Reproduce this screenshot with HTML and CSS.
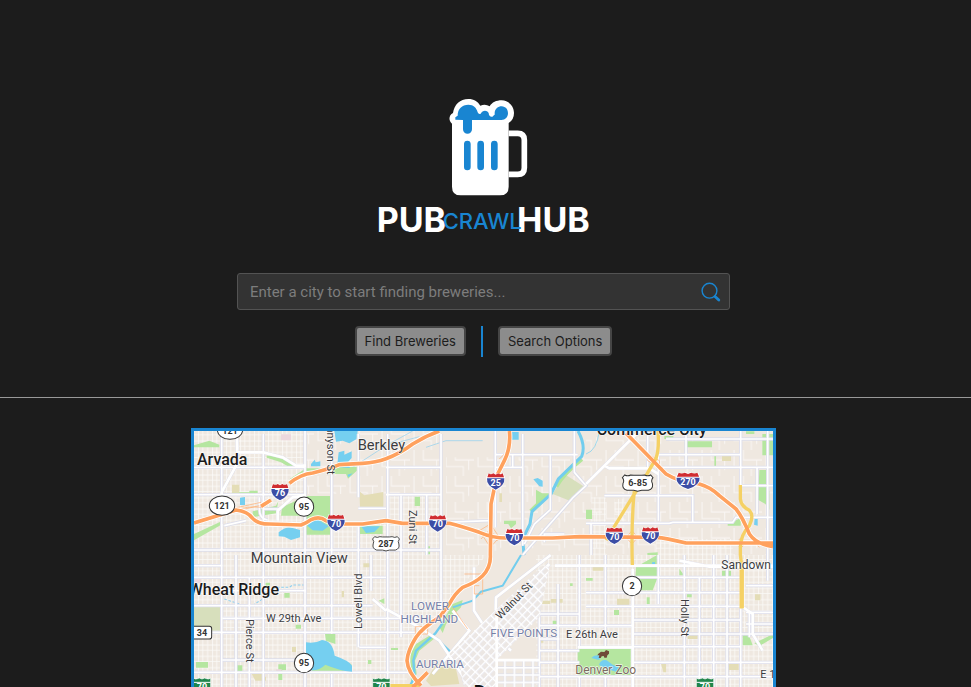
FILE: index.html
```html
<!DOCTYPE html>
<html lang="en">
<head>
<meta charset="utf-8">
<title>Pub Crawl Hub</title>
<link rel="stylesheet" href="styles.css">
</head>
<body>
<header class="hero">
  <svg class="logo" viewBox="-6 0 693 450" role="img" aria-label="Pub Crawl Hub">
    <path d="M416 130H443Q463 130 463 150V233Q463 253 443 253H416" fill="none" stroke="#fff" stroke-width="17"/>
    <path d="M246 101C235 93 236 75 249 69C253 43 270 27 295 27C312 27 323 34 331 47Q346 40 359 49C366 37 379 31 395 31C417 32 432 48 432 69Q432 89 416 99V290Q416 316 390 316H272Q246 316 246 290Z" fill="#fff"/>
    <path d="M256 89V82L263 77C263 56 276 44 295 44C311 44 320 54 323 67Q326 74 332 71C337 61 350 59 356 69C356 78 365 85 370 77Q376 75 374 68C375 57 384 49 395 49C407 50 414 58 414 70C414 81 406 90 394 90H306V118A13 13 0 0 1 279 118V90Z" fill="#1985d1"/>
    <path d="M292 162V231M332 162V231M373 162V231" stroke="#1985d1" stroke-width="20" stroke-linecap="round"/>
    <g class="wordmark">
      <text x="20" y="427" class="word-strong">PUB</text>
      <text x="441" y="427" class="word-strong">HUB</text>
      <text x="218" y="416" class="word-light">CRAWL</text>
    </g>
  </svg>
  <form class="search" onsubmit="return false">
    <div class="field">
      <input type="text" class="field-input" aria-label="City" placeholder="Enter a city to start finding breweries...">
      <svg class="field-icon" viewBox="0 0 20 20" aria-hidden="true"><circle cx="8.5" cy="8.7" r="7.4" fill="none" stroke="#1985d1" stroke-width="1.4"/><path d="M14 14.4L17.8 18" stroke="#1985d1" stroke-width="2.8" stroke-linecap="round"/></svg>
    </div>
    <div class="actions">
      <button type="submit" class="btn">Find Breweries</button>
      <span class="divider"></span>
      <button type="button" class="btn">Search Options</button>
    </div>
  </form>
</header>
<main class="map-section">
<div class="map">
<svg class="map-canvas" viewBox="24 21 1737 768" preserveAspectRatio="xMidYMin slice" role="img" aria-label="Map of Denver">
  <defs>
    <pattern id="blocks" width="42" height="34" patternUnits="userSpaceOnUse"><path d="M8 0V34M23 0V34M0 17H42M38 0V34M0 33H42" stroke="#fbf9f7" stroke-width="2.5"/></pattern>
    <pattern id="sparse" width="96" height="78" patternUnits="userSpaceOnUse"><path d="M12 0V50H64V78M40 0V30H96M80 30V60" fill="none" stroke="#f9f6f4" stroke-width="3"/></pattern>
    <pattern id="downtown" width="22" height="17" patternUnits="userSpaceOnUse" patternTransform="rotate(-46)"><path d="M0 2H22M2 0V17" stroke="#dfdfeb" stroke-width="8"/><path d="M0 2H22M2 0V17" stroke="#fff" stroke-width="5"/></pattern>
    <pattern id="center" width="28" height="22" patternUnits="userSpaceOnUse"><path d="M0 5H28M5 0V22" stroke="#dedfeb" stroke-width="8"/><path d="M0 5H28M5 0V22" stroke="#fff" stroke-width="5"/></pattern>
    <symbol id="interstate" viewBox="0 0 60 60" overflow="visible">
      <path d="M7 5L14 9Q21 8 24 4L30 8L36 4Q39 8 46 9L53 5Q54 13 58 18Q61 42 30 58Q-1 42 2 18Q6 13 7 5Z" fill="#fff"/>
      <path d="M9 6Q15 11 23 6L30 10L37 6Q45 11 51 6L55 18H5Z" fill="#d02d31"/>
      <path d="M4 21H56Q58 42 30 55Q2 42 4 21Z" fill="#3c4da5"/>
    </symbol>
    <symbol id="usroute" viewBox="0 0 96 54" overflow="visible"><path d="M9 3Q18 8 27 3L36 4H60L69 3Q78 8 87 3L94 11Q87 20 92 28Q96 44 80 49H60L48 52L36 49H16Q0 44 4 28Q9 20 2 11Z" fill="#fff" stroke="#333" stroke-width="3"/></symbol>
    <symbol id="business" viewBox="0 0 56 50" overflow="visible"><path d="M2 4Q8 9 14 6L20 4L28 7L36 4L42 6Q48 9 54 4V50H2Z" fill="#20854b" stroke="#fff" stroke-width="2"/><path d="M2 17H54" stroke="#fff" stroke-width="3"/></symbol>
  </defs>

  <rect x="24" y="21" width="1737" height="1500" fill="#efe8e0"/>
  <g>
    <path d="M24 21H360V300H600V212H765V393H900L790 540L663 700V790H24ZM1050 393H1761V790H1050Z" fill="url(#blocks)"/>
    <path d="M360 21H765V210H360ZM780 100H1200V380H780ZM1200 40H1761V393H1200Z" fill="url(#sparse)"/>
    <path d="M1215 220H1260V393H1215ZM1410 345H1640V393H1410ZM1285 225H1320V290H1285Z" fill="url(#blocks)"/>
  </g>

  <g class="park">
    <path d="M24 64L70 50L100 62V70H24ZM138 188L159 204H190V208H215V200H190V206H138ZM242 95Q275 90 295 105L325 122L310 130L285 115L242 101Z"/>
    <path d="M310 166L360 133H430L425 140L360 152L325 166ZM430 128H515V138L486 164L480 150H430ZM288 250L360 216H432V332H360V275H285ZM200 262L270 245L277 232L270 268L200 280ZM24 330L110 290V300L24 349ZM520 305H590V330H520Z"/>
    <path d="M686 218H702V246H686ZM725 367H732V391H725ZM1050 197L1068 208L1095 208L1060 240H1050ZM954 290H990V300L975 313L967 300H954Z"/>
    <path d="M1503 52H1578V70H1503ZM1729 30H1761V94H1729ZM1680 22H1705V30H1680ZM1435 36H1462V45H1435ZM1585 90H1590V126H1585ZM1720 138H1740V185L1750 202V257L1738 240L1716 227ZM1200 257L1218 257V285H1200ZM1625 300L1664 282V305H1625ZM1384 387L1415 385V393H1384Z"/>
    <path d="M1350 429L1413 393V465L1400 499H1360Q1350 475 1348 465ZM1480 434L1494 454H1480ZM1200 462H1220V470H1200ZM1608 440H1635V456H1608ZM1284 558H1299V573H1284ZM1382 520H1391V540H1382ZM1503 507H1517V520H1503ZM1670 629H1687L1700 664H1670ZM1705 658L1761 630V642L1720 666Z"/>
    <path d="M1175 673H1334V753H1175ZM295 507H311V521H295ZM329 602H345V614H329ZM239 476H252V488H239ZM30 714H66V731H30ZM153 724H169V750H153ZM277 721H300V738H289V768H277ZM417 629H448V660L420 650ZM378 735L430 705L496 720V744H378ZM546 708H556V720H546ZM578 530L595 523V540Z"/>
    <path d="M800 540L830 528L825 550L805 570L780 600L770 627L760 610ZM673 690L690 660L730 635L750 640L700 680L687 710L692 750L675 780ZM615 672H636V678H615ZM1100 590H1113V603H1100ZM1152 478H1160V486H1152Z"/>
  </g>
  <path d="M1190 185L1135 150L1100 210L1155 232L1198 185ZM24 546H102V620H24Z" fill="#d7dfbc"/>
  <path d="M138 182H160V206H138ZM520 202L535 214L592 204V248H522ZM940 208H948V234H940ZM1608 90H1635V111H1608ZM1065 530H1092V540H1065ZM1060 628H1072V656H1060ZM1094 525H1130V536H1094ZM1293 524H1330V543H1293ZM1220 426H1252V440H1220ZM1505 632H1535V645H1505ZM1628 715H1658V738H1628ZM1424 715H1440V745H1432ZM1707 511H1723V529H1707ZM532 418H557V430H532ZM467 501H474V520H467ZM318 669H330V684H318ZM195 745L220 742L240 760V770H208ZM720 770L750 720L810 735L820 780L735 786Z" fill="#e4ddb6"/>
  <path d="M285 31H315V49H285ZM24 466H45V478H24ZM270 736H287V750H270Z" fill="#edd8dd"/>
  <g class="water">
    <path d="M445 21H515L512 45L490 58L470 50L450 53ZM458 85L475 80V92L497 82V102L484 116L492 132L462 130L454 120ZM375 120L386 107L389 115L403 112V127H375ZM162 221L177 219V243H162ZM278 325Q300 305 320 312L342 318V340L315 348L295 338L278 337ZM364 305Q375 288 397 287L428 307L410 320L380 319ZM525 307H582L565 324L540 327ZM484 152L500 148L488 160Z"/>
    <path d="M975 24H998V47H975ZM1042 166L1055 162L1070 170V188L1060 187ZM1706 283L1715 280V305L1704 302ZM1398 415L1407 414V427L1398 425Z"/>
  </g>
  <g fill="none" stroke="#b2e69a" stroke-width="14"><path d="M1187 105Q1135 145 1110 187M1080 218L1035 262"/></g>
  <g fill="none" stroke="#72cdee" stroke-width="9">
    <path d="M1176 21Q1200 65 1187 97L1117 165L1095 210L1038 262L1032 300L1010 345L1014 393"/>
    <path d="M1005 393L950 485L885 503L860 530L800 550" stroke-width="6"/><path d="M775 590L748 628L690 680L682 710L686 760L672 785M750 642L800 690" stroke-width="7"/>
    <path d="M500 130L600 65L680 21M720 70L780 50L890 50M600 65L700 38" stroke="#8dcff0" stroke-width="2"/>
    <path d="M115 525L190 550L230 525L270 490H310L320 483H360" stroke="#8dcff0" stroke-width="3" stroke-dasharray="8 5"/>
    <path d="M1240 21Q1232 80 1200 90" stroke-width="2"/>
  </g>

  <g id="streets">
    <g class="street-edge">
      <path id="local" d="M107 21V790M150 393V790M190 460V790M232 30V790M357 21V790M437 40V629M437 750V790M517 30V220M517 300V670M555 393V500M605 30V790M645 215V640M722 212V393M765 30V560M928 21V310M1010 30V365M1060 440V790M1116 480V790M1180 393V670M1180 755V790M1215 300V393M1258 393V670M1258 755V790M1500 21V130M1385 20V130M1417 90V290M1417 393V540M1495 393V790M1540 460V790M1583 393V790M1623 393V790M1664 21V190M1664 545V790M1690 560V640M1713 130V270M1745 21V470M24 130H355M24 212H360M600 130H765M600 212H765M232 255H285M517 253H600M24 378H765M24 425H110M24 460H600M110 500H360M24 545H560M110 583H700M24 625H690M110 708H357M24 745H670M520 670H600M930 92H1175M1417 92H1664M1420 130H1761M1440 45H1761M1255 215H1520V295M1200 298H1450L1460 295H1640L1650 280H1761M1664 185H1761M765 295L913 290M930 130H1010M1340 460H1664M1200 506H1664M1200 547H1664M1340 588H1664M1340 630H1761M1340 668H1664M1060 570H1180M1060 605H1340M1060 645H1120M1060 680H1180M1060 715H1180M1340 715H1761M1060 758H1761M1680 485H1761M1680 565H1761M1680 600H1761M1093 92V257L1045 300L1015 360M980 92V130M1135 330H1075V355M1165 21V145L1200 185L1160 222L1010 393"/>
      <path id="collector" d="M150 21Q158 70 150 125L107 205V265M150 85H232L290 100L330 125H360M360 215L320 220L275 260V290M1200 180L1360 21M1255 125L1270 133H1390L1417 150M1094 393L930 520L929 557L1000 620M600 555L700 610L760 650L830 755L840 790M864 430V560L890 600L975 680M800 560L850 620L740 750M1090 420L850 670M1107 425H1300L1761 425M1340 435V790M1480 410L1570 428H1761M560 525L600 560M1664 545L1700 570V630L1730 680M1175 670H1340"/>
      <path d="M107 300V378M115 305L180 290M220 220V255Q220 285 245 288"/>
    </g>
    <g class="street-core">
      <use href="#local"/><use href="#collector" class="street-wide"/>
      <path d="M107 300V378M115 305L180 290M220 220V255Q220 285 245 288"/>
    </g>
  </g>
  <path class="water" d="M360 655Q385 660 408 648Q440 650 446 695Q490 710 498 725V743Q460 740 418 722Q395 745 360 736ZM1216 702Q1225 690 1246 696L1239 708ZM1239 722Q1245 705 1262 709L1280 722L1300 730L1290 743L1255 733Z"/>
  <path d="M790 690L1070 425L1090 430L1060 580L930 710V790H835L820 720Z" fill="#ece7e4"/>
  <path d="M790 690L1070 425L1090 430L1060 580L930 710V790H835L820 720Z" fill="url(#downtown)"/>
  <path d="M930 708H1060V790H930Z" fill="url(#center)"/>
  <path d="M932 570V790M930 708H1060" stroke="#fff" stroke-width="8"/>

  <g fill="none" stroke="#ffad70" stroke-width="2">
    <path d="M110 260L225 235M120 268L220 245M150 260Q180 245 225 250M135 255Q185 265 205 290M190 273Q205 295 225 298M315 180L360 145L410 140M350 290L340 310M880 320L913 300L940 340L913 370ZM885 345L913 315L935 350M1385 90L1420 110V130L1385 110ZM1320 340L1338 320L1355 340L1338 360ZM1650 357L1664 342L1680 357L1664 373ZM1690 310V335L1720 370M688 608H725V630H688ZM835 450H890V510H865V485H880M800 550L845 615M940 105L955 90"/>
  </g>
  <use href="#highways" class="freeway-edge"/>
  <g fill="none" stroke="#f5d164" stroke-width="10">
    <path d="M1416 21Q1420 75 1410 103L1380 155L1345 210L1260 348M1345 200Q1335 300 1339 423M1663 183V225Q1665 247 1690 259Q1705 275 1690 305Q1665 330 1663 370V393L1667 425V553M600 785H700"/>
  </g>
  <path d="M1667 425V553" stroke="#f5d164" stroke-width="13"/>
  <g class="freeway">
    <path id="highways" d="M225 247L255 228M310 178Q345 150 380 147Q430 135 460 122L530 118Q570 115 600 104Q640 90 680 60Q720 35 760 21M24 297L150 258Q185 262 200 283Q215 300 250 300L345 303Q365 295 375 287Q400 275 420 290L450 300H530L600 290L650 298H790Q830 308 880 325Q920 342 960 342H1100L1180 338L1410 340Q1440 342 1500 357H1761M970 21Q975 70 955 110L935 150Q925 190 915 240L913 393Q915 430 890 455Q870 475 830 490Q805 510 790 540L760 580Q710 610 690 640Q665 680 663 710Q665 745 705 785M680 790L725 745M1320 28L1440 150Q1480 175 1540 180Q1575 190 1600 215L1650 255Q1670 280 1690 330Q1710 360 1761 368"/>
  </g>

  <g class="shields">
    <g fill="#fff" stroke="#333" stroke-width="3">
      <ellipse cx="132" cy="18" rx="38" ry="28"/><ellipse cx="108" cy="245" rx="38" ry="29"/>
      <circle cx="354" cy="248" r="29"/><circle cx="354" cy="717" r="29"/><circle cx="1338" cy="486" r="29"/>
      <rect x="12" y="607" width="65" height="38" rx="7"/>
    </g>
    <use href="#usroute" x="558" y="332" width="84" height="54"/>
    <use href="#usroute" x="1307" y="150" width="96" height="54"/>
    <use href="#interstate" x="252" y="174" width="60" height="60"/>
    <use href="#interstate" x="420" y="266" width="60" height="60"/>
    <use href="#interstate" x="725" y="268" width="60" height="60"/>
    <use href="#interstate" x="899" y="142" width="60" height="60"/>
    <use href="#interstate" x="955" y="309" width="60" height="60"/>
    <use href="#interstate" x="1255" y="305" width="60" height="60"/>
    <use href="#interstate" x="1363" y="304" width="60" height="60"/>
    <svg x="1466" y="140" width="80" height="60" viewBox="0 0 60 60" preserveAspectRatio="none"><use href="#interstate" width="60" height="60"/></svg>
    <use href="#business" x="20" y="758" width="56" height="50"/>
    <use href="#business" x="558" y="758" width="56" height="50"/>
    <use href="#business" x="1529" y="758" width="56" height="50"/>
    <g class="route route-dark">
      <text x="132" y="30">121</text><text x="108" y="254">121</text><text x="354" y="257">95</text><text x="354" y="726">95</text><text x="1338" y="495">2</text><text x="48" y="635">34</text><text x="600" y="369">287</text><text x="1355" y="187">6-85</text>
    </g>
    <g class="route route-light">
      <text x="282" y="216">76</text><text x="450" y="308">70</text><text x="755" y="310">70</text><text x="929" y="185">25</text><text x="985" y="351">70</text><text x="1285" y="347">70</text><text x="1393" y="346">70</text><text x="1506" y="183">270</text><text x="48" y="799">70</text><text x="586" y="799">70</text><text x="1557" y="799">70</text>
    </g>
  </g>
  <path d="M1237 689L1245 683L1255 684L1260 678L1269 682V689L1264 694L1262 701H1255L1253 696L1247 697L1244 702H1238L1240 694L1234 694Z" fill="#704a38"/>

  <g class="place">
    <g class="city"><text x="33" y="123">Arvada</text><text x="279" y="514" text-anchor="end">Wheat Ridge</text><text x="1397" y="33" text-anchor="middle">Commerce City</text></g>
    <text x="863" y="823" class="capital">Denver</text>
    <text x="515" y="78" class="town">Berkley</text><text x="194" y="417" class="town">Mountain View</text>
    <text x="1606" y="436" class="suburb">Sandown</text>
    <g class="road-name">
      <text x="240" y="595">W 29th Ave</text><text x="1140" y="641">E 26th Ave</text><text x="1723" y="763">E 17th Ave</text>
      <text transform="translate(527 615) rotate(-90)">Lowell Blvd</text>
      <text transform="translate(180 585) rotate(90)">Pierce St</text>
      <text transform="translate(424 152) rotate(90)" text-anchor="end">Tennyson St</text>
      <text transform="translate(669 258) rotate(90)">Zuni St</text>
      <text transform="translate(1486 525) rotate(90)">Holly St</text>
      <text transform="translate(943 588) rotate(-46)">Walnut St</text>
    </g>
    <g class="district"><text x="732" y="557">LOWER</text><text x="730" y="596">HIGHLAND</text><text x="1013" y="639">FIVE POINTS</text><text x="762" y="731">AURARIA</text></g>
    <text x="1168" y="750" class="poi">Denver Zoo</text>
  </g>
</svg>
</div>
</main>
</body>
</html>
```
FILE: styles.css
```css
* { box-sizing: border-box; }
body {
  margin: 0;
  min-height: 100vh;
  display: flex;
  flex-direction: column;
  background: #1c1c1c;
  color: #fff;
  font-family: Inter, "Liberation Sans", sans-serif;
}
.hero {
  display: flex;
  flex-direction: column;
  align-items: center;
  padding: 90px 4px 40px 0;
  border-bottom: 1px solid #999;
}
.logo { display: block; width: 231px; height: 150px; }
.wordmark { font-family: Inter, sans-serif; }
.word-strong { font-size: 102px; font-weight: 700; fill: #fff; }
.word-light { font-size: 66px; font-weight: 500; fill: #1985d1; }
.search { width: 51%; margin-top: 33px; }
.field {
  display: flex;
  align-items: center;
  height: 37px;
  padding: 0 8px 0 12px;
  border: 1px solid #535353;
  border-radius: 3px;
  background: #333;
}
.field-input {
  flex: 1;
  min-width: 0;
  padding: 0;
  border: 0;
  outline: 0;
  background: transparent;
  color: #ddd;
  font: 400 15px/20px Roboto, sans-serif;
}
.field-input::placeholder { color: #7d7d7d; opacity: 1; }
.field-icon { width: 20px; height: 20px; }
.actions {
  display: flex;
  justify-content: center;
  align-items: flex-start;
  gap: 15px;
  margin-top: 16px;
}
.btn {
  height: 30px;
  padding: 0 8px;
  border: 2px solid #454545;
  border-radius: 4px;
  background: #8c8c8c;
  color: #1c1c1c;
  font: 400 13px/20px Inter, sans-serif;
}
.divider { width: 2px; height: 31px; background: #1985d1; }
.map-section {
  flex: 1;
  display: flex;
  justify-content: center;
  padding: 30px 4px 0 0;
}
.map {
  width: 60.5%;
  border: 3px solid #1985d1;
  border-bottom: 0;
  overflow: hidden;
}
.map-canvas { display: block; width: 100%; height: 100%; }
.park { fill: #b5e6a0; }
.water { fill: #75cff0; }
.street-edge { fill: none; stroke: #dcddea; stroke-width: 10; }
.street-core { fill: none; stroke: #fff; stroke-width: 5; }
.street-wide { stroke-width: 8; }
.freeway { fill: none; stroke: #ffa15d; stroke-width: 11; stroke-linejoin: round; }
.freeway-edge { fill: none; stroke: #fff; stroke-width: 16; }
.route { font: 700 27px Roboto, sans-serif; text-anchor: middle; }
.route-dark { fill: #333; }
.route-light { fill: #fff; }
.place {
  font-family: Roboto, sans-serif;
  fill: #3c3c40;
  paint-order: stroke;
  stroke: #fff;
  stroke-width: 4;
  stroke-opacity: 0.75;
  stroke-linejoin: round;
}
.city { font-size: 48px; font-weight: 500; fill: #1c1c1c; }
.capital { font-size: 57px; font-weight: 700; fill: #111; }
.town { font-size: 44px; }
.suburb { font-size: 36px; }
.road-name { font-size: 33px; }
.district { font-size: 35px; fill: #7580a8; text-anchor: middle; }
.poi { font-size: 36px; fill: #7d6b60; }
```
